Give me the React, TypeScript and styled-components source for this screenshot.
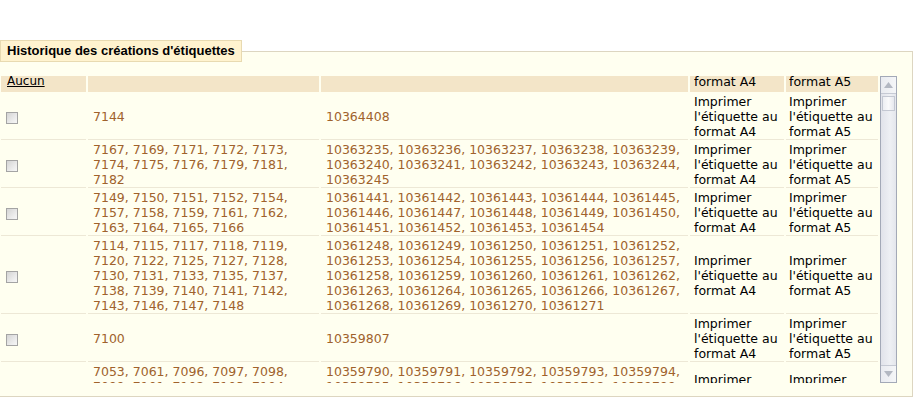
import React from 'react';
import styled, { createGlobalStyle } from 'styled-components';

const GlobalStyle = createGlobalStyle`
  html, body {
    margin: 0;
    padding: 0;
    background: #ffffff;
  }
  * {
    box-sizing: border-box;
  }
`;

const Page = styled.div`
  padding-top: 40px;
  width: 924px;
  height: 400px;
  overflow: hidden;
`;

const Fieldset = styled.fieldset`
  margin: 0;
  padding: 0 0 12px 0;
  width: 913px;
  min-width: 0;
  background: #fffff0;
  border: 1px solid #ddd6c1;
  border-left: none;
`;

const Legend = styled.legend`
  margin: 0;
  padding: 3px 6px 3px 6px;
  background: #fff3cf;
  border: 1px solid #e8dab1;
  font-family: 'Liberation Sans', Arial, sans-serif;
  font-weight: bold;
  font-size: 13px;
  line-height: 14px;
  color: #000;
`;

const ScrollArea = styled.div`
  display: flex;
  margin-top: 12px;
  height: 310px;
`;

const Viewport = styled.div`
  width: 880px;
  height: 309px;
  overflow: hidden;
`;

const Table = styled.table`
  margin-left: -1px;
  border-collapse: separate;
  border-spacing: 2px;
  table-layout: fixed;
  width: 881px;
  font-family: 'DejaVu Sans', Verdana, sans-serif;
  font-size: 12.5px;
  line-height: 15px;
`;

const HeadCell = styled.th<{ w: number; pad?: number }>`
  width: ${p => p.w}px;
  height: 16px;
  padding: 0 0 0 ${p => p.pad ?? 5}px;
  background: #f3e5c8;
  font-weight: normal;
  text-align: left;
  color: #000;
  vertical-align: bottom;
`;

// only the last line of the header text stays visible, its top slightly cut
const HeadClip = styled.div`
  height: 16px;
  padding-bottom: 3px;
  overflow: hidden;
  display: flex;
  flex-direction: column;
  justify-content: flex-end;
`;

const NoneLink = styled.a`
  color: #000;
  text-decoration: underline;
  font-size: 12px;
  cursor: pointer;
`;

const Cell = styled.td<{ pad?: number; dark?: boolean }>`
  padding: 0 2px 0 ${p => p.pad ?? 5}px;
  vertical-align: middle;
  border-bottom: 1px solid #ede8d6;
  color: ${p => (p.dark ? '#000' : '#a0622c')};
  overflow: hidden;
`;

const Check = styled.input`
  appearance: none;
  display: block;
  margin: 2px 0 0 0;
  width: 12px;
  height: 12px;
  border: 1px solid #a4a4a4;
  background: linear-gradient(135deg, #d4d4d4 0%, #eeeeee 70%, #f6f6f6 100%);
`;

const ScrollBar = styled.div`
  margin-top: 2px;
  width: 17px;
  height: 307px;
  display: flex;
  flex-direction: column;
  border: 1px solid #a3a9b7;
  background: linear-gradient(90deg, #e1e3ea 0%, #eef0f4 60%, #e4e6ec 100%);
`;

const ArrowButton = styled.div`
  height: 17px;
  display: flex;
  align-items: center;
  justify-content: center;
  background: linear-gradient(90deg, #e9ebf0 0%, #f5f6f8 100%);
  border-bottom: 1px solid #c6cad4;
  &:last-child {
    border-bottom: none;
    border-top: 1px solid #c6cad4;
  }
`;

const Track = styled.div`
  flex: 1;
  padding-top: 2px;
`;

const Thumb = styled.div`
  height: 15px;
  margin: 0 1px;
  border: 1px solid #c4c8d2;
  background: linear-gradient(90deg, #eceef2 0%, #fafafb 50%, #e6e8ee 100%);
`;

const Triangle: React.FC<{ down?: boolean }> = ({ down }) => (
  <svg width="9" height="6" viewBox="0 0 9 6">
    <polygon
      points={down ? '0,0 9,0 4.5,6' : '0,6 9,6 4.5,0'}
      fill="#b3b8c2"
    />
  </svg>
);

interface Row {
  ids: string;
  nums: string;
  box: boolean;
}

const rows: Row[] = [
  { ids: '7144', nums: '10364408', box: true },
  {
    ids: '7167, 7169, 7171, 7172, 7173, 7174, 7175, 7176, 7179, 7181, 7182',
    nums: '10363235, 10363236, 10363237, 10363238, 10363239, 10363240, 10363241, 10363242, 10363243, 10363244, 10363245',
    box: true,
  },
  {
    ids: '7149, 7150, 7151, 7152, 7154, 7157, 7158, 7159, 7161, 7162, 7163, 7164, 7165, 7166',
    nums: '10361441, 10361442, 10361443, 10361444, 10361445, 10361446, 10361447, 10361448, 10361449, 10361450, 10361451, 10361452, 10361453, 10361454',
    box: true,
  },
  {
    ids: '7114, 7115, 7117, 7118, 7119, 7120, 7122, 7125, 7127, 7128, 7130, 7131, 7133, 7135, 7137, 7138, 7139, 7140, 7141, 7142, 7143, 7146, 7147, 7148',
    nums: '10361248, 10361249, 10361250, 10361251, 10361252, 10361253, 10361254, 10361255, 10361256, 10361257, 10361258, 10361259, 10361260, 10361261, 10361262, 10361263, 10361264, 10361265, 10361266, 10361267, 10361268, 10361269, 10361270, 10361271',
    box: true,
  },
  { ids: '7100', nums: '10359807', box: true },
  {
    ids: '7053, 7061, 7096, 7097, 7098, 7099, 7101, 7102, 7103, 7104, 7105, 7106, 7107, 7108, 7109, 7110, 7111',
    nums: '10359790, 10359791, 10359792, 10359793, 10359794, 10359795, 10359796, 10359797, 10359798, 10359799, 10359800, 10359801, 10359802, 10359803, 10359804, 10359805, 10359806',
    box: false,
  },
];

const printA4 = "Imprimer l'étiquette au format A4";
const printA5 = "Imprimer l'étiquette au format A5";

const App: React.FC = () => {
  return (
    <Page>
      <GlobalStyle />
      <Fieldset>
        <Legend>Historique des créations d'étiquettes</Legend>
        <ScrollArea>
          <Viewport>
            <Table>
              <thead>
                <tr>
                  <HeadCell w={85} pad={6}>
                    <HeadClip>
                      <NoneLink>Aucun</NoneLink>
                    </HeadClip>
                  </HeadCell>
                  <HeadCell w={231} />
                  <HeadCell w={367} />
                  <HeadCell w={94} pad={4}>
                    <HeadClip>
                      <div>{printA4}</div>
                    </HeadClip>
                  </HeadCell>
                  <HeadCell w={92} pad={3}>
                    <HeadClip>
                      <div>{printA5}</div>
                    </HeadClip>
                  </HeadCell>
                </tr>
              </thead>
              <tbody>
                {rows.map((r, i) => (
                  <tr key={i}>
                    <Cell pad={5}>{r.box && <Check type="checkbox" />}</Cell>
                    <Cell pad={5}>{r.ids}</Cell>
                    <Cell pad={5}>{r.nums}</Cell>
                    <Cell pad={4} dark>{printA4}</Cell>
                    <Cell pad={3} dark>{printA5}</Cell>
                  </tr>
                ))}
              </tbody>
            </Table>
          </Viewport>
          <ScrollBar>
            <ArrowButton>
              <Triangle />
            </ArrowButton>
            <Track>
              <Thumb />
            </Track>
            <ArrowButton>
              <Triangle down />
            </ArrowButton>
          </ScrollBar>
        </ScrollArea>
      </Fieldset>
    </Page>
  );
};

export default App;
